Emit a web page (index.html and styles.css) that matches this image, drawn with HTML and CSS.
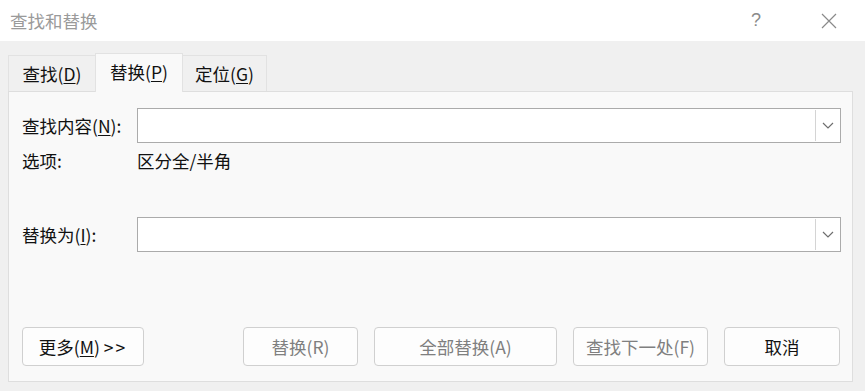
FILE: index.html
```html
<!DOCTYPE html>
<html lang="zh-CN">
<head>
<meta charset="utf-8">
<title>查找和替换</title>
<link rel="stylesheet" href="styles.css">
</head>
<body>
<div class="dialog">
  <div class="titlebar">
    <span class="title">查找和替换</span>
    <span class="tb-btns">
      <span class="help">?</span>
      <span class="close"><svg width="16" height="16" viewBox="0 0 16 16"><path d="M1 1 L15 15 M15 1 L1 15" stroke="#8a8a8a" stroke-width="1.2" fill="none"/></svg></span>
    </span>
  </div>
  <div class="content">
    <div class="tabs">
      <div class="tab t1">查找(<u>D</u>)</div>
      <div class="tab t2 active">替换(<u>P</u>)</div>
      <div class="tab t3">定位(<u>G</u>)</div>
    </div>
    <div class="panel">
      <div class="row">
        <span class="label">查找内容(<u>N</u>):</span>
        <div class="combo">
          <div class="combo-text"></div>
          <div class="combo-btn"><svg width="12" height="7" viewBox="0 0 12 7"><path d="M1 1 L6 6 L11 1" stroke="#6e6e6e" stroke-width="1.2" fill="none"/></svg></div>
        </div>
      </div>
      <div class="row opts">
        <span class="label">选项:</span>
        <span class="value">区分全/半角</span>
      </div>
      <div class="row repl">
        <span class="label">替换为(<u>I</u>):</span>
        <div class="combo">
          <div class="combo-text"></div>
          <div class="combo-btn"><svg width="12" height="7" viewBox="0 0 12 7"><path d="M1 1 L6 6 L11 1" stroke="#6e6e6e" stroke-width="1.2" fill="none"/></svg></div>
        </div>
      </div>
      <div class="buttons">
        <button class="btn more">更多(<u>M</u>) <span class="arrows">&gt;&gt;</span></button>
        <div class="btn-group">
          <button class="btn w-replace disabled">替换(R)</button>
          <button class="btn w-all disabled">全部替换(A)</button>
          <button class="btn w-next disabled">查找下一处(F)</button>
          <button class="btn w-cancel">取消</button>
        </div>
      </div>
    </div>
  </div>
</div>
</body>
</html>
```
FILE: styles.css
```css
* { box-sizing: border-box; }
html, body { margin: 0; padding: 0; }
body {
  width: 865px;
  height: 391px;
  overflow: hidden;
  font-family: "Noto Sans CJK SC", "Noto Sans", sans-serif;
  font-size: 17.5px;
  color: #111111;
  background: #f0f0f0;
}
.dialog { width: 865px; height: 391px; display: flex; flex-direction: column; }
.titlebar {
  height: 41px;
  background: #ffffff;
  display: flex;
  align-items: center;
  padding-left: 10px;
}
.title { color: #9a9a9a; font-size: 17.5px; line-height: 20px; }
.tb-btns { margin-left: auto; display: flex; align-items: center; }
.help {
  color: #8a8a8a;
  font-family: "Liberation Sans", sans-serif;
  font-size: 18px;
  width: 20px;
  text-align: center;
  margin-right: 55px;
}
.close { width: 16px; height: 16px; margin-right: 28px; display: flex; }
.content {
  flex: 1;
  padding: 12px 12px 9px 8px;
  display: flex;
  flex-direction: column;
}
.tabs { display: flex; align-items: flex-end; height: 38px; position: relative; z-index: 1; }
.tab {
  height: 36px;
  border: 1px solid #e2e2e2;
  border-bottom: none;
  background: #f0f0f0;
  display: flex;
  align-items: center;
  justify-content: center;
  line-height: 20px;
}
.t1 { width: 87px; border-right: none; }
.t2 { width: 88px; }
.t3 { width: 84px; border-left: none; }
.tab.active {
  height: 39px;
  margin-bottom: -1px;
  background: #f9f9f9;
  padding-bottom: 3px;
}
.panel {
  flex: 1;
  border: 1px solid #dedede;
  background: #f9f9f9;
  padding: 16px 11px 15px 13px;
  display: flex;
  flex-direction: column;
}
.row { display: flex; align-items: center; }
.label { width: 115px; flex: none; line-height: 20px; }
.value { line-height: 20px; }
.opts { margin-top: 8px; }
.repl { margin-top: 46px; }
.combo {
  flex: 1;
  height: 35px;
  border: 1px solid #ababab;
  background: #ffffff;
  display: flex;
  padding: 1px;
}
.combo-text { flex: 1; }
.combo-btn {
  width: 24px;
  border-left: 1px solid #d4d4d4;
  display: flex;
  align-items: center;
  justify-content: center;
}
.buttons { margin-top: auto; display: flex; justify-content: space-between; }
.btn-group { display: flex; gap: 16px; margin-right: 1px; }
.btn {
  height: 39px;
  border: 1px solid #d0d0d0;
  border-radius: 4px;
  background: #fdfdfd;
  font-family: "Noto Sans CJK SC", "Noto Sans", sans-serif;
  font-size: 17.5px;
  color: #111111;
  padding: 0;
  line-height: 20px;
}
.arrows { letter-spacing: 2px; }
.btn.disabled { color: #7f7f7f; }
.more { width: 122px; }
.w-replace { width: 115px; }
.w-all { width: 183px; }
.w-next { width: 135px; }
.w-cancel { width: 116px; }
u { text-underline-offset: 2px; }
```
